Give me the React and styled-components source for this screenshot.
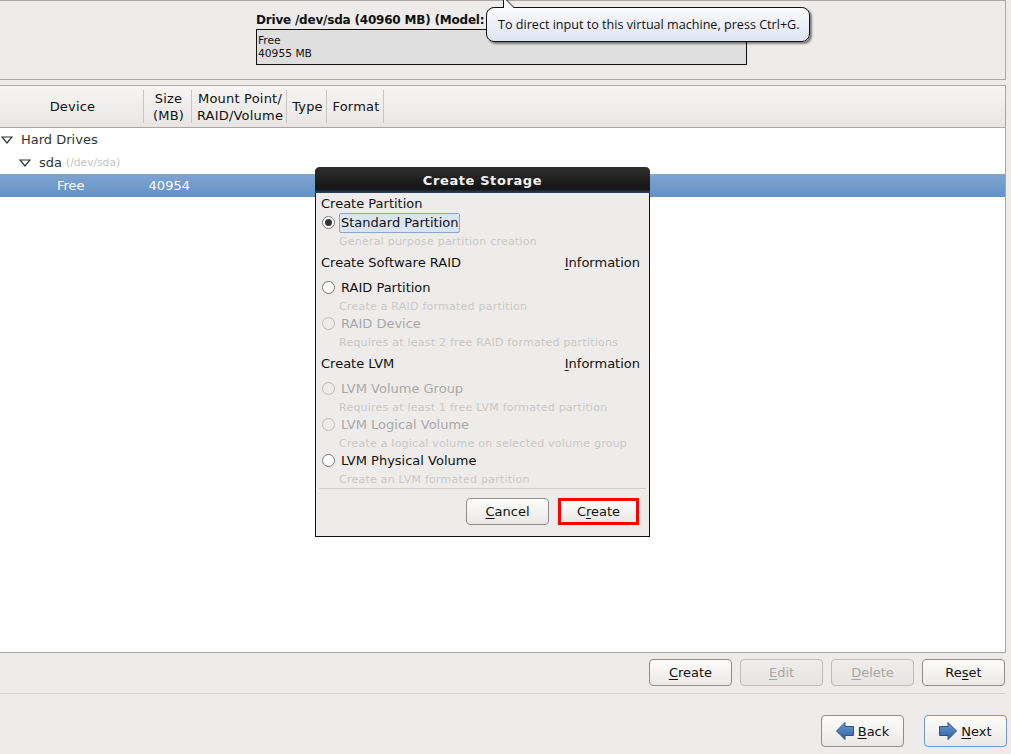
import React from "react";
import styled, { createGlobalStyle } from "styled-components";

const GlobalStyle = createGlobalStyle`
  html, body {
    margin: 0;
    padding: 0;
    background: #edeceb;
  }
  * {
    box-sizing: border-box;
  }
`;

const Screen = styled.div`
  position: relative;
  width: 1011px;
  height: 754px;
  overflow: hidden;
  background: #edeceb;
  color: #111;
  font-family: "DejaVu Sans", sans-serif;
  font-size: 13px;
  display: flex;
  flex-direction: column;
`;

const DrivePanel = styled.div`
  width: 1006px;
  height: 80px;
  border: 1px solid #a9a8a6;
  border-left: none;
  padding: 11px 0 0 256px;
`;
const DriveTitle = styled.div`
  font-size: 12px;
  font-weight: bold;
  line-height: 16px;
  letter-spacing: -0.2px;
  white-space: nowrap;
`;
const DriveBar = styled.div`
  width: 491px;
  height: 36px;
  margin-top: 1px;
  border: 1px solid #111;
  background: #dfdfdf;
  padding: 4px 0 0 1px;
  font-size: 10.7px;
  line-height: 13px;
`;

const TableFrame = styled.div`
  width: 1006px;
  height: 568px;
  margin-top: 5px;
  border: 1px solid #a9a8a6;
  border-left: none;
  background: #fff;
  display: flex;
  flex-direction: column;
`;
const HeaderRow = styled.div`
  height: 42px;
  display: flex;
  flex-shrink: 0;
  background: linear-gradient(#f6f5f4, #e7e6e4);
  border-bottom: 1px solid #a9a8a6;
`;
const HeaderCell = styled.div`
  width: ${(props) => props.w}px;
  margin: 4px 0;
  padding-left: 2px;
  border-right: 1px solid #c8c7c5;
  display: flex;
  align-items: center;
  justify-content: center;
  text-align: center;
  line-height: 17px;
  letter-spacing: 0.2px;
  white-space: nowrap;
`;
const HeaderFill = styled.div`
  flex: 1;
`;
const TreeRow = styled.div`
  height: 23px;
  display: flex;
  align-items: center;
  padding-left: ${(props) => props.indent}px;
  white-space: nowrap;
  color: ${(props) => (props.selected ? "#fff" : "#2e3436")};
  background: ${(props) =>
    props.selected ? "linear-gradient(#7fa5d3, #6490c4)" : "transparent"};
`;
const Expander = styled.svg`
  width: 12px;
  height: 8px;
  margin-right: ${(props) => props.gap}px;
`;
const DevPath = styled.span`
  margin-left: 4px;
  font-size: 10.7px;
  color: #c4c4c4;
`;
const SizeValue = styled.span`
  margin-left: 64px;
`;

const ActionBar = styled.div`
  width: 1005px;
  display: flex;
  justify-content: flex-end;
  gap: 8px;
  margin-top: 6px;
  height: 28px;
`;
const Divider = styled.div`
  height: 1px;
  width: 1005px;
  margin-top: 6px;
  background: #d3d2d0;
`;
const NavBar = styled.div`
  width: 1007px;
  display: flex;
  justify-content: flex-end;
  gap: 20px;
  margin-top: 21px;
`;
const Button = styled.div`
  width: 83px;
  height: ${(props) => (props.tall ? 32 : 27)}px;
  border: 1px solid ${(props) =>
    props.focused ? "#7399c6" : props.disabled ? "#bdbcba" : "#8f8e8c"};
  border-radius: 4px;
  background: ${(props) =>
    props.disabled
      ? "linear-gradient(#eeedec, #e6e5e3)"
      : "linear-gradient(#fdfdfc, #e9e8e6)"};
  color: ${(props) => (props.disabled ? "#a8a8a6" : "#111")};
  display: flex;
  align-items: center;
  justify-content: center;
  gap: 4px;
  white-space: nowrap;
`;
const Key = styled.span`
  text-decoration: underline;
  text-underline-offset: 2px;
`;

// modal dialog floating over the partition list
const Dialog = styled.div`
  position: absolute;
  left: 315px;
  top: 167px;
  width: 335px;
  height: 370px;
  background: #edeceb;
  border: 1px solid #111;
  border-top: none;
  border-radius: 5px 5px 0 0;
  display: flex;
  flex-direction: column;
`;
const DialogTitle = styled.div`
  height: 26px;
  margin: 0 -1px;
  flex-shrink: 0;
  background: linear-gradient(#2e2e2e 0%, #141414 85%, #2c4660 100%);
  border-radius: 5px 5px 0 0;
  color: #f2f2f2;
  font-weight: bold;
  text-align: center;
  line-height: 27px;
  letter-spacing: 0.6px;
`;
const DialogBody = styled.div`
  flex: 1;
  padding: 1px 9px 0 5px;
  display: flex;
  flex-direction: column;
`;
const SectionRow = styled.div`
  height: ${(props) => props.h}px;
  margin-top: ${(props) => props.mt || 0}px;
  display: flex;
  justify-content: space-between;
  align-items: center;
`;
const OptionRow = styled.div`
  height: 19px;
  margin-top: ${(props) => props.mt || 0}px;
  display: flex;
  align-items: center;
  color: ${(props) => (props.off ? "#a9a9a7" : "#111")};
`;
const Radio = styled.span`
  width: 13px;
  height: 13px;
  margin: 0 4px 0 1px;
  border-radius: 50%;
  border: 1px solid ${(props) => (props.off ? "#bdbcba" : "#777")};
  background: ${(props) => (props.off ? "#edeceb" : "#fff")};
  display: flex;
  align-items: center;
  justify-content: center;
`;
const RadioDot = styled.span`
  width: 7px;
  height: 7px;
  border-radius: 50%;
  background: #333;
`;
const OptionLabel = styled.span`
  padding: 0 1px;
  height: 20px;
  line-height: 18px;
  border: 1px solid ${(props) => (props.focused ? "#8aa6c9" : "transparent")};
  border-radius: 2px;
  background: ${(props) => (props.focused ? "#dbe4ef" : "transparent")};
  white-space: nowrap;
`;
const Hint = styled.div`
  height: 17px;
  padding-left: 18px;
  font-size: 11px;
  line-height: 19px;
  letter-spacing: 0.23px;
  color: #c9c9c7;
  white-space: nowrap;
`;
const DialogRule = styled.div`
  height: 1px;
  margin: 1px -6px 0 -2px;
  background: #cfcecc;
`;
const DialogButtons = styled.div`
  display: flex;
  justify-content: flex-end;
  gap: 9px;
  margin-top: 9px;
  margin-right: 1px;
`;
const HighlightButton = styled(Button)`
  width: 81px;
  border: 3px solid #f00;
  border-radius: 0;
`;

// hint balloon from the VM console, over the drive panel
const Balloon = styled.div`
  position: absolute;
  left: 486px;
  top: 7px;
  width: 324px;
  height: 35px;
  border: 1px solid #111;
  border-radius: 8px;
  background: linear-gradient(#fafbfd, #dfe4f1);
  box-shadow: 2px 2px 2px rgba(0, 0, 0, 0.45);
  padding-left: 11px;
  line-height: 34px;
  font-family: "Open Sans", "DejaVu Sans", sans-serif;
  font-size: 12.6px;
  white-space: nowrap;
`;
const BalloonTail = styled.svg`
  position: absolute;
  left: 15px;
  top: -8px;
  width: 14px;
  height: 9px;
`;

const ArrowGradient = ({ id }) => (
  <linearGradient id={id} x1="0" y1="0" x2="0" y2="1">
    <stop offset="0" stopColor="#6c9bd0" />
    <stop offset="1" stopColor="#2f5f9e" />
  </linearGradient>
);
const ArrowLeft = () => (
  <svg width="18" height="18" viewBox="0 0 18 18">
    <ArrowGradient id="backFill" />
    <path d="M0.5 9 L9 0.5 V4.5 H17.5 V13.5 H9 V17.5 Z" fill="url(#backFill)" stroke="#2a558c" />
  </svg>
);
const ArrowRight = () => (
  <svg width="18" height="18" viewBox="0 0 18 18">
    <ArrowGradient id="nextFill" />
    <path d="M17.5 9 L9 0.5 V4.5 H0.5 V13.5 H9 V17.5 Z" fill="url(#nextFill)" stroke="#2a558c" />
  </svg>
);
const Triangle = ({ gap }) => (
  <Expander gap={gap} viewBox="0 0 12 8">
    <path d="M1 1 H11 L6 7 Z" fill="#fff" stroke="#2e3436" strokeWidth="1.2" />
  </Expander>
);

const options = [
  { label: "RAID Partition", hint: "Create a RAID formated partition", mt: 6 },
  { label: "RAID Device", hint: "Requires at least 2 free RAID formated partitions", off: true },
];
const lvmOptions = [
  { label: "LVM Volume Group", hint: "Requires at least 1 free LVM formated partition", off: true, mt: 6 },
  { label: "LVM Logical Volume", hint: "Create a logical volume on selected volume group", off: true },
  { label: "LVM Physical Volume", hint: "Create an LVM formated partition" },
];

const renderOption = (item) => (
  <React.Fragment key={item.label}>
    <OptionRow off={item.off} mt={item.mt}>
      <Radio off={item.off} />
      <OptionLabel>{item.label}</OptionLabel>
    </OptionRow>
    <Hint>{item.hint}</Hint>
  </React.Fragment>
);

const App = () => {
  return (
    <Screen>
      <GlobalStyle />
      <DrivePanel>
        <DriveTitle>Drive /dev/sda (40960 MB) (Model:</DriveTitle>
        <DriveBar>
          Free
          <br />
          40955 MB
        </DriveBar>
      </DrivePanel>

      <TableFrame>
        <HeaderRow>
          <HeaderCell w={144}>Device</HeaderCell>
          <HeaderCell w={48}>
            Size
            <br />
            (MB)
          </HeaderCell>
          <HeaderCell w={95}>
            Mount Point/
            <br />
            RAID/Volume
          </HeaderCell>
          <HeaderCell w={40}>Type</HeaderCell>
          <HeaderCell w={57}>Format</HeaderCell>
          <HeaderFill />
        </HeaderRow>
        <TreeRow indent={1}>
          <Triangle gap={8} />
          Hard Drives
        </TreeRow>
        <TreeRow indent={19}>
          <Triangle gap={8} />
          sda
          <DevPath>(/dev/sda)</DevPath>
        </TreeRow>
        <TreeRow indent={57} selected>
          Free
          <SizeValue>40954</SizeValue>
        </TreeRow>
      </TableFrame>

      <ActionBar>
        <Button>
          <span>
            <Key>C</Key>reate
          </span>
        </Button>
        <Button disabled>
          <span>
            <Key>E</Key>dit
          </span>
        </Button>
        <Button disabled>
          <span>
            <Key>D</Key>elete
          </span>
        </Button>
        <Button>
          <span>
            Re<Key>s</Key>et
          </span>
        </Button>
      </ActionBar>
      <Divider />
      <NavBar>
        <Button tall>
          <ArrowLeft />
          <span>
            <Key>B</Key>ack
          </span>
        </Button>
        <Button tall focused>
          <ArrowRight />
          <span>
            <Key>N</Key>ext
          </span>
        </Button>
      </NavBar>

      <Dialog>
        <DialogTitle>Create Storage</DialogTitle>
        <DialogBody>
          <SectionRow h={19}>Create Partition</SectionRow>
          <OptionRow>
            <Radio>
              <RadioDot />
            </Radio>
            <OptionLabel focused>Standard Partition</OptionLabel>
          </OptionRow>
          <Hint>General purpose partition creation</Hint>
          <SectionRow h={19} mt={4}>
            <span>Create Software RAID</span>
            <span>
              <Key>I</Key>nformation
            </span>
          </SectionRow>
          {options.map(renderOption)}
          <SectionRow h={19} mt={4}>
            <span>Create LVM</span>
            <span>
              <Key>I</Key>nformation
            </span>
          </SectionRow>
          {lvmOptions.map(renderOption)}
          <DialogRule />
          <DialogButtons>
            <Button>
              <span>
                <Key>C</Key>ancel
              </span>
            </Button>
            <HighlightButton>
              <span>
                C<Key>r</Key>eate
              </span>
            </HighlightButton>
          </DialogButtons>
        </DialogBody>
      </Dialog>

      <Balloon>
        <BalloonTail viewBox="0 0 14 9">
          <path d="M1.5 0 V9 H13 L4.5 0 Z" fill="#fafbfd" />
          <path d="M1.5 0 V8 M4.5 0 L12.5 8" fill="none" stroke="#111" />
        </BalloonTail>
        To direct input to this virtual machine, press Ctrl+G.
      </Balloon>
    </Screen>
  );
};

export default App;
